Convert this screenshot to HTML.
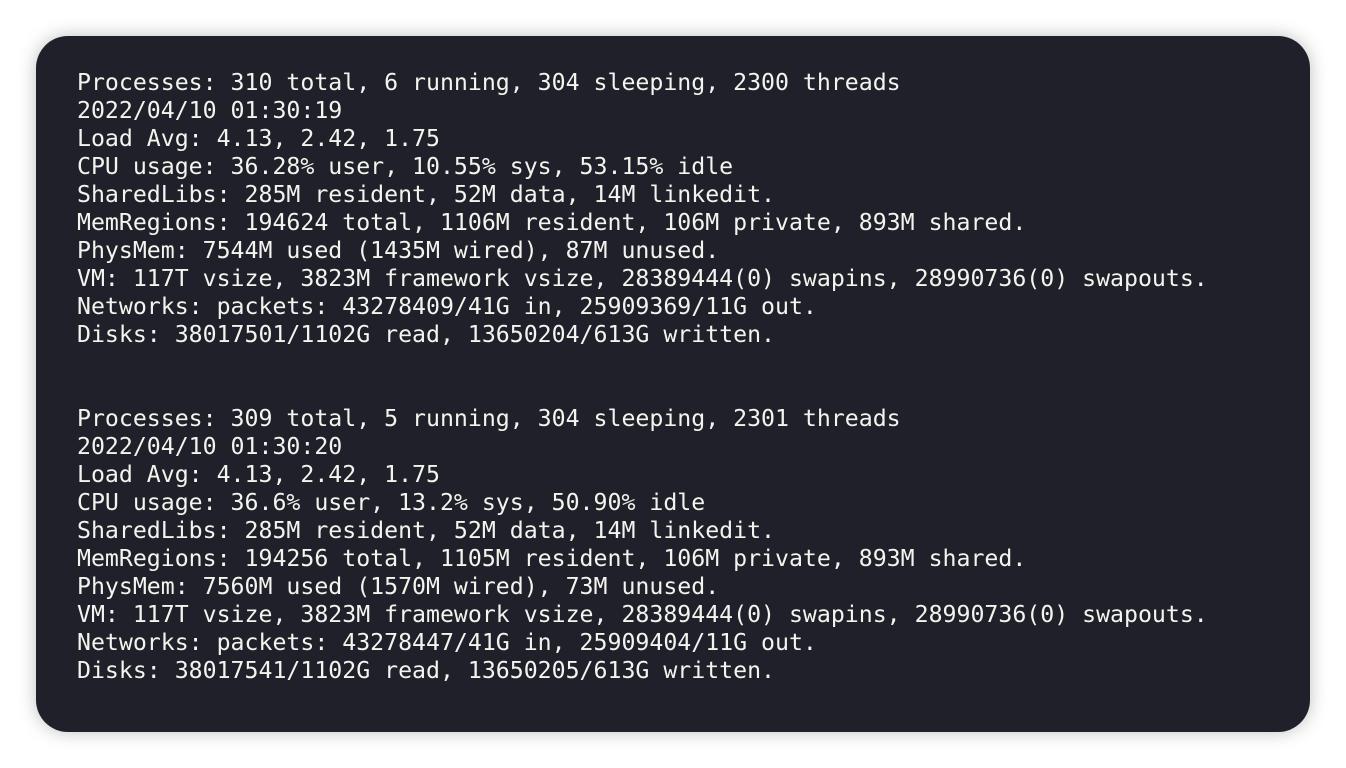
<!DOCTYPE html>
<html><head><meta charset="utf-8"><style>
html,body{margin:0;padding:0;width:1346px;height:768px;background:#fff;overflow:hidden}
.box{position:absolute;left:36px;top:36px;width:1274px;height:696px;background:#1f2029;border-radius:32px;box-shadow:0 0 18px rgba(0,0,0,0.25)}
pre{position:absolute;left:41px;top:33px;margin:0;font-family:"DejaVu Sans Mono","Liberation Mono",monospace;font-size:23.2px;line-height:28px;color:#f4f4ee}
</style></head><body><div class="box"><pre>Processes: 310 total, 6 running, 304 sleeping, 2300 threads
2022/04/10 01:30:19
Load Avg: 4.13, 2.42, 1.75
CPU usage: 36.28% user, 10.55% sys, 53.15% idle
SharedLibs: 285M resident, 52M data, 14M linkedit.
MemRegions: 194624 total, 1106M resident, 106M private, 893M shared.
PhysMem: 7544M used (1435M wired), 87M unused.
VM: 117T vsize, 3823M framework vsize, 28389444(0) swapins, 28990736(0) swapouts.
Networks: packets: 43278409/41G in, 25909369/11G out.
Disks: 38017501/1102G read, 13650204/613G written.


Processes: 309 total, 5 running, 304 sleeping, 2301 threads
2022/04/10 01:30:20
Load Avg: 4.13, 2.42, 1.75
CPU usage: 36.6% user, 13.2% sys, 50.90% idle
SharedLibs: 285M resident, 52M data, 14M linkedit.
MemRegions: 194256 total, 1105M resident, 106M private, 893M shared.
PhysMem: 7560M used (1570M wired), 73M unused.
VM: 117T vsize, 3823M framework vsize, 28389444(0) swapins, 28990736(0) swapouts.
Networks: packets: 43278447/41G in, 25909404/11G out.
Disks: 38017541/1102G read, 13650205/613G written.</pre></div></body></html>
